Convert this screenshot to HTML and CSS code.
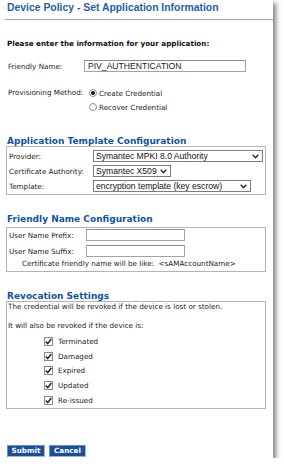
FILE: index.html
```html
<!DOCTYPE html>
<html lang="en">
<head>
    <meta charset="UTF-8">
    <meta name="viewport" content="width=device-width, initial-scale=1.0">
    <title>Device Policy</title>
    <link rel="stylesheet" href="styles.css">
</head>
<body>

    <div class="page">
        <h1 class="title">Device Policy - Set Application Information</h1>

        <div class="content">
            <p class="intro">Please enter the information for your application:</p>

            <div class="row name-row">
                <span class="label">Friendly Name:</span>
                <input class="text-input friendly" type="text" value="PIV_AUTHENTICATION">
            </div>

            <div class="row method-row">
                <span class="label">Provisioning Method:</span>
                <div class="radio-group">
                    <label class="radio-option"><span class="radio checked"></span>Create Credential</label>
                    <label class="radio-option"><span class="radio"></span>Recover Credential</label>
                </div>
            </div>

            <h2 class="section-title first">Application Template Configuration</h2>
            <div class="box template-box">
                <div class="box-row">
                    <span class="label">Provider:</span>
                    <div class="select provider"><span>Symantec MPKI 8.0 Authority</span>
                        <svg width="7" height="5" viewBox="0 0 7 5"><polyline points="0.7,0.8 3.5,3.8 6.3,0.8" fill="none" stroke="#222" stroke-width="1.3"/></svg>
                    </div>
                </div>
                <div class="box-row">
                    <span class="label">Certificate Authority:</span>
                    <div class="select authority"><span>Symantec X509</span>
                        <svg width="7" height="5" viewBox="0 0 7 5"><polyline points="0.7,0.8 3.5,3.8 6.3,0.8" fill="none" stroke="#222" stroke-width="1.3"/></svg>
                    </div>
                </div>
                <div class="box-row">
                    <span class="label">Template:</span>
                    <div class="select template"><span>encryption template (key escrow)</span>
                        <svg width="7" height="5" viewBox="0 0 7 5"><polyline points="0.7,0.8 3.5,3.8 6.3,0.8" fill="none" stroke="#222" stroke-width="1.3"/></svg>
                    </div>
                </div>
            </div>

            <h2 class="section-title second">Friendly Name Configuration</h2>
            <div class="box name-box">
                <div class="box-row">
                    <span class="label">User Name Prefix:</span>
                    <input class="text-input affix" type="text">
                </div>
                <div class="box-row">
                    <span class="label">User Name Suffix:</span>
                    <input class="text-input affix" type="text">
                </div>
                <p class="note">Certificate friendly name will be like:&nbsp; &lt;sAMAccountName&gt;</p>
            </div>

            <h2 class="section-title third">Revocation Settings</h2>
            <div class="box revoke-box">
                <p class="line">The credential will be revoked if the device is lost or stolen.</p>
                <p class="line second-line">It will also be revoked if the device is:</p>
                <div class="checks">
                    <label class="check-row"><span class="checkbox"><svg width="7" height="7" viewBox="0 0 7 7"><polyline points="0.8,3.6 2.7,5.6 6.3,1" fill="none" stroke="#222" stroke-width="1.5"/></svg></span>Terminated</label>
                    <label class="check-row"><span class="checkbox"><svg width="7" height="7" viewBox="0 0 7 7"><polyline points="0.8,3.6 2.7,5.6 6.3,1" fill="none" stroke="#222" stroke-width="1.5"/></svg></span>Damaged</label>
                    <label class="check-row"><span class="checkbox"><svg width="7" height="7" viewBox="0 0 7 7"><polyline points="0.8,3.6 2.7,5.6 6.3,1" fill="none" stroke="#222" stroke-width="1.5"/></svg></span>Expired</label>
                    <label class="check-row"><span class="checkbox"><svg width="7" height="7" viewBox="0 0 7 7"><polyline points="0.8,3.6 2.7,5.6 6.3,1" fill="none" stroke="#222" stroke-width="1.5"/></svg></span>Updated</label>
                    <label class="check-row"><span class="checkbox"><svg width="7" height="7" viewBox="0 0 7 7"><polyline points="0.8,3.6 2.7,5.6 6.3,1" fill="none" stroke="#222" stroke-width="1.5"/></svg></span>Re-issued</label>
                </div>
            </div>

            <div class="actions">
                <button class="btn submit">Submit</button>
                <button class="btn cancel">Cancel</button>
            </div>
        </div>
    </div>

</body>
</html>
```

FILE: styles.css
```css
body {
    margin: 0;
    background: #ffffff;
    font-family: "DejaVu Sans", Verdana, sans-serif;
    font-size: 7.2px;
    color: #1a1a1a;
}

.page {
    width: 273px;
    height: 458px;
    background: #ffffff;
    box-shadow: 3px 3px 5px rgba(0, 0, 0, 0.5);
}

.title {
    margin: 0 0 0 5px;
    padding: 0 0 3px 2px;
    font: bold 10.4px/16px "Liberation Sans", Arial, sans-serif;
    color: #1e5eae;
    border-bottom: 1px solid #a4a4a4;
}

.content {
    padding-left: 6px;
}

.intro {
    margin: 19px 0 0 1px;
    font-weight: bold;
    line-height: 10px;
    color: #111;
}

.row {
    display: flex;
    align-items: center;
}

.name-row {
    margin: 11px 0 0 2px;
    height: 12px;
}

.name-row .label {
    width: 76px;
}

.text-input {
    height: 12px;
    box-sizing: border-box;
    margin: 0;
    padding: 0 3px;
    border: 1px solid #a3a3a3;
    border-top-color: #8a8a8a;
    font: 8.6px "Liberation Sans", Arial, sans-serif;
    color: #222;
    background: #fff;
    outline: none;
}

.friendly {
    width: 162px;
}

.method-row {
    margin: 14px 0 0 2px;
    align-items: flex-start;
}

.method-row .label {
    width: 81px;
    line-height: 14px;
}

.radio-option {
    display: flex;
    align-items: center;
    gap: 2px;
    height: 14px;
}

.radio {
    width: 8px;
    height: 8px;
    box-sizing: border-box;
    border: 1px solid #8c8c8c;
    border-radius: 50%;
    background: #fff;
    display: flex;
    align-items: center;
    justify-content: center;
}

.radio.checked::after {
    content: "";
    width: 4px;
    height: 4px;
    border-radius: 50%;
    background: #111;
}

.section-title {
    margin: 0 0 0 1px;
    font-size: 9px;
    line-height: 9px;
    font-weight: bold;
    color: #1052a4;
}

.section-title.first {
    margin-top: 23px;
}

.section-title.second {
    margin-top: 20px;
}

.section-title.third {
    margin-top: 20px;
}

.box {
    width: 260px;
    box-sizing: border-box;
    border: 1px solid #b4b4b4;
}

.box-row {
    display: flex;
    align-items: center;
    height: 12px;
}

.template-box {
    display: flex;
    flex-direction: column;
    gap: 3px;
    padding: 3px 0 2px 2px;
}

.template-box .label {
    width: 84px;
}

.select {
    height: 12px;
    box-sizing: border-box;
    border: 1px solid #7d7d7d;
    display: flex;
    align-items: center;
    justify-content: space-between;
    padding: 0 3px 0 2px;
    font: 8.6px "Liberation Sans", Arial, sans-serif;
    color: #111;
    background: #fff;
}

.provider {
    width: 170px;
}

.authority {
    width: 78px;
}

.template {
    width: 158px;
}

.name-box {
    margin-top: 3px;
    display: flex;
    flex-direction: column;
    gap: 4px;
    padding: 1px 0 2px 2px;
}

.name-box .label {
    width: 77px;
}

.affix {
    width: 99px;
}

.note {
    margin: -2px 0 0 0;
    padding-left: 13px;
    line-height: 10px;
}

.revoke-box {
    padding: 0 0 0 1px;
}

.line {
    margin: 0;
    line-height: 10px;
}

.second-line {
    margin-top: 9px;
}

.checks {
    margin-top: 3px;
    padding-left: 36px;
}

.check-row {
    display: flex;
    align-items: center;
    gap: 5px;
    height: 14.75px;
}

.checkbox {
    width: 9px;
    height: 9px;
    box-sizing: border-box;
    border: 1px solid #8a8a8a;
    background: #fff;
    display: flex;
    align-items: center;
    justify-content: center;
}

.actions {
    display: flex;
    gap: 4px;
    margin: 36px 0 0 1px;
}

.btn {
    height: 12px;
    margin: 0;
    padding: 0;
    box-sizing: border-box;
    background: #1a4f9e;
    color: #ffffff;
    font: bold 7.2px/10px "DejaVu Sans", Verdana, sans-serif;
    border: 1px solid #a8b2c2;
    border-top-color: #6d8cbf;
    border-left-color: #6d8cbf;
    cursor: pointer;
}

.submit {
    width: 38px;
}

.cancel {
    width: 37px;
}
```
